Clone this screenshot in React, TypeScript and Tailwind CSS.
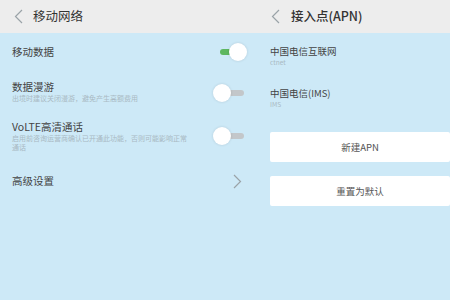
import React from "react";

const font = { fontFamily: '"Noto Sans CJK SC", "Noto Sans", sans-serif' };

function Chevron({ dir = "left", className = "" }: { dir?: "left" | "right"; className?: string }) {
  return (
    <svg width="9" height="15" viewBox="0 0 9 15" className={className}>
      <path
        d={dir === "left" ? "M8 1 L1.5 7.5 L8 14" : "M1 1 L7.5 7.5 L1 14"}
        fill="none"
        stroke="#9aa3a8"
        strokeWidth="1.2"
      />
    </svg>
  );
}

function Toggle({ on }: { on: boolean }) {
  return (
    <div className="relative w-[34px] h-[18px] shrink-0">
      {on ? (
        <>
          <div className="absolute left-[4px] top-[6px] w-[18px] h-[6px] rounded-full bg-[#5db760]" />
          <div className="absolute left-[13px] top-0 w-[18px] h-[18px] rounded-full bg-white shadow-[0_0_3px_rgba(0,0,0,0.12)]" />
        </>
      ) : (
        <>
          <div className="absolute left-[12px] top-[6px] w-[16px] h-[6px] rounded-full bg-[#c3c7ca]" />
          <div className="absolute left-[-3px] top-0 w-[18px] h-[18px] rounded-full bg-white shadow-[0_0_3px_rgba(0,0,0,0.12)]" />
        </>
      )}
    </div>
  );
}

export default function App() {
  return (
    <div className="w-[450px] h-[300px] overflow-hidden flex bg-[#cde9f7]" style={font}>
      {/* Left screen */}
      <div className="w-[260px] flex flex-col">
        <div className="h-[33px] bg-[#ededed] flex items-center pl-[14px] gap-[10px]">
          <Chevron />
          <span className="text-[12.5px] text-[#333] leading-none">移动网络</span>
        </div>
        <div className="flex flex-col pl-[12px] pr-[10px]">
          <div className="h-[38px] flex items-center justify-between">
            <span className="text-[10.5px] text-[#444]">移动数据</span>
            <Toggle on />
          </div>
          <div className="h-[40px] flex items-center justify-between">
            <div className="flex flex-col">
              <span className="text-[10.5px] text-[#444] leading-[14px]">数据漫游</span>
              <span className="text-[7px] text-[#a9b9c3] leading-[9px]">出境时建议关闭漫游，避免产生高额费用</span>
            </div>
            <div className="mt-[4px]"><Toggle on={false} /></div>
          </div>
          <div className="h-[50px] flex items-center justify-between">
            <div className="flex flex-col w-[180px]">
              <span className="text-[10.5px] text-[#444] leading-[14px]">VoLTE高清通话</span>
              <span className="text-[7px] text-[#a9b9c3] leading-[9px]">启用前咨询运营商确认已开通此功能，否则可能影响正常通话</span>
            </div>
            <Toggle on={false} />
          </div>
          <div className="h-[40px] flex items-center justify-between">
            <span className="text-[10.5px] text-[#444]">高级设置</span>
            <Chevron dir="right" className="mr-[8px]" />
          </div>
        </div>
      </div>
      {/* Right screen */}
      <div className="flex-1 flex flex-col">
        <div className="h-[33px] bg-[#ededed] flex items-center pl-[11px] gap-[11px]">
          <Chevron />
          <span className="text-[12.5px] text-[#333] leading-none font-medium">接入点(APN)</span>
        </div>
        <div className="flex flex-col pl-[10px]">
          <div className="h-[42px] flex flex-col justify-center pt-[3px]">
            <span className="text-[9.5px] text-[#444] leading-[13px]">中国电信互联网</span>
            <span className="text-[6.5px] text-[#a9b9c3] leading-[9px]">ctnet</span>
          </div>
          <div className="h-[42px] flex flex-col justify-center pt-[3px]">
            <span className="text-[9.5px] text-[#444] leading-[13px]">中国电信(IMS)</span>
            <span className="text-[6.5px] text-[#a9b9c3] leading-[9px]">IMS</span>
          </div>
          <div className="mt-[15px] h-[30px] bg-white rounded-[2px] flex items-center justify-center">
            <span className="text-[9.5px] text-[#555]">新建APN</span>
          </div>
          <div className="mt-[14px] h-[30px] bg-white rounded-[2px] flex items-center justify-center">
            <span className="text-[9.5px] text-[#555]">重置为默认</span>
          </div>
        </div>
      </div>
    </div>
  );
}
